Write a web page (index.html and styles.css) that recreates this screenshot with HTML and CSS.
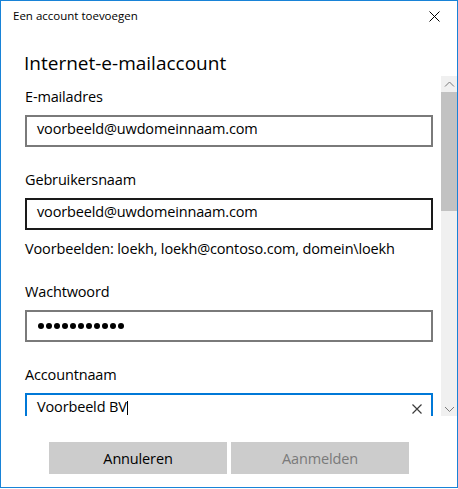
FILE: index.html
```html
<!DOCTYPE html>
<html lang="nl">
<head>
<meta charset="utf-8">
<title>Een account toevoegen</title>
<link rel="stylesheet" href="styles.css">
</head>
<body>
<div class="window">
  <header class="titlebar">
    <span class="title">Een account toevoegen</span>
    <svg class="close" width="11" height="11" viewBox="0 0 11 11"><path d="M0.5 0.5 L10.5 10.5 M10.5 0.5 L0.5 10.5"/></svg>
  </header>
  <h1 class="heading">Internet-e-mailaccount</h1>
  <div class="main">
    <div class="scroll">
      <div class="field first">
        <div class="label">E-mailadres</div>
        <div class="input">voorbeeld@uwdomeinnaam.com</div>
      </div>
      <div class="field">
        <div class="label">Gebruikersnaam</div>
        <div class="input hover">voorbeeld@uwdomeinnaam.com</div>
        <div class="hint">Voorbeelden: loekh, loekh@contoso.com, domein\loekh</div>
      </div>
      <div class="field">
        <div class="label">Wachtwoord</div>
        <div class="input password">
          <span class="dot"></span><span class="dot"></span><span class="dot"></span><span class="dot"></span><span class="dot"></span><span class="dot"></span><span class="dot"></span><span class="dot"></span><span class="dot"></span><span class="dot"></span><span class="dot"></span>
        </div>
      </div>
      <div class="field">
        <div class="label">Accountnaam</div>
        <div class="input focus">
          <span class="value">Voorbeeld BV</span><span class="caret"></span>
          <svg class="clear" width="10" height="10" viewBox="0 0 10 10"><path d="M0.5 0.5 L9.5 9.5 M9.5 0.5 L0.5 9.5"/></svg>
        </div>
      </div>
    </div>
    <div class="scrollbar">
      <div class="arrow"><svg width="16" height="16" viewBox="0 0 16 16"><polyline points="4,10.5 8.5,6 13,10.5"/></svg></div>
      <div class="track"><div class="thumb"></div></div>
      <div class="arrow"><svg width="16" height="16" viewBox="0 0 16 16"><polyline points="4,7 8.5,11.5 13,7"/></svg></div>
    </div>
  </div>
  <footer class="footer">
    <button class="btn">Annuleren</button>
    <button class="btn disabled">Aanmelden</button>
  </footer>
</div>
</body>
</html>
```

FILE: styles.css
```css
* { box-sizing: border-box; }
html, body { margin: 0; padding: 0; background: #ffffff; }
body { font-family: "Open Sans", "Noto Sans", sans-serif; color: #000; }

.window {
  width: 458px;
  height: 488px;
  border: 1px solid #1883d7;
  display: flex;
  flex-direction: column;
  background: #fff;
}

.titlebar {
  height: 32px;
  display: flex;
  justify-content: space-between;
  align-items: flex-start;
  padding: 7px 17px 0 12px;
}
.title { font-size: 11.5px; line-height: 16px; }
.close { margin-top: 3px; }
.close path { stroke: #000; stroke-width: 1; fill: none; }

.heading {
  margin: 17px 0 0 23px;
  font-size: 19px;
  line-height: 26px;
  font-weight: 400;
}

.main {
  height: 340px;
  display: flex;
}
.scroll {
  flex: 1;
  overflow: hidden;
  padding: 11px 8px 0 24px;
}
.field { margin-top: 23px; }
.field.first { margin-top: 0; }
.label, .hint, .input, .btn { font-size: 14.5px; letter-spacing: -0.15px; }
.label { line-height: 20px; }
.input {
  margin-top: 8px;
  height: 32px;
  border: 2px solid #7a7a7a;
  padding: 0 10px;
  line-height: 24px;
  display: flex;
  align-items: flex-start;
}
.input.hover { border-color: #1a1a1a; }
.input.focus { border-color: #0078d7; }
.hint { margin-top: 9px; line-height: 20px; }

.password { align-items: center; gap: 2px; padding-left: 11px; padding-bottom: 1px; }
.dot { width: 6px; height: 6px; border-radius: 50%; background: #000; }

.value { white-space: pre; }
.caret { width: 1px; height: 14px; background: #000; margin: 6px 0 0 0; }
.clear { margin-left: auto; margin-top: 9px; margin-right: -1px; }
.clear path { stroke: #3c3c3c; stroke-width: 1.2; fill: none; }

.scrollbar {
  width: 16px;
  background: #f0f0f0;
  display: flex;
  flex-direction: column;
}
.arrow { height: 16px; }
.arrow svg { display: block; }
.arrow polyline { stroke: #7a7a7a; stroke-width: 1; fill: none; }
.track { flex: 1; }
.thumb { height: 119px; background: #c2c2c2; }

.footer {
  flex: 1;
  display: flex;
  justify-content: center;
  gap: 4px;
  padding-top: 26px;
}
.btn {
  width: 178px;
  height: 32px;
  border: none;
  background: #cccccc;
  font-family: "Open Sans", "Noto Sans", sans-serif;
  color: #000;
  padding: 0;
}
.btn.disabled { color: #7a7a7a; }
```
